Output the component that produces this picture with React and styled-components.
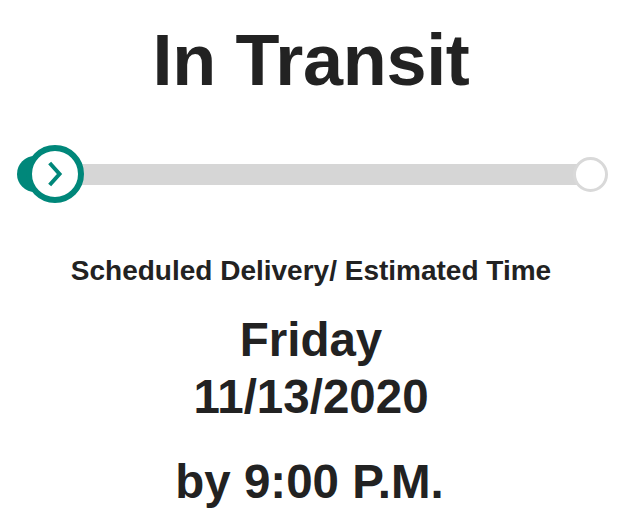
import React from "react";
import styled, { createGlobalStyle } from "styled-components";

const Global = createGlobalStyle`
  html, body { margin: 0; padding: 0; background: #ffffff; }
  body { font-family: "Liberation Sans", Arial, Helvetica, sans-serif; color: #222222; }
`;

const Page = styled.main`
  width: 619px;
  display: flex;
  flex-direction: column;
  align-items: stretch;
  text-align: center;
`;

const Title = styled.h1`
  margin: 24px 0 0 3px;
  font-size: 72px;
  line-height: 72px;
  font-weight: 700;
  letter-spacing: -0.3px;
`;

const Track = styled.div`
  position: relative;
  height: 60px;
  margin: 48px 11px 0 17px;
  display: flex;
  align-items: center;
`;

const StartDot = styled.span`
  flex: none;
  width: 36px;
  height: 36px;
  border-radius: 50%;
  background: #00877a;
  position: relative;
  z-index: 1;
`;

const Bar = styled.div`
  flex: 1;
  height: 21px;
  margin: 0 -18px;
  background: #d6d6d6;
`;

const EndRing = styled.span`
  flex: none;
  width: 29px;
  height: 29px;
  border-radius: 50%;
  border: 3px solid #d9d9d9;
  background: #ffffff;
  position: relative;
  z-index: 1;
`;

const Thumb = styled.span`
  position: absolute;
  left: 9px;
  top: 50%;
  transform: translateY(-50%);
  width: 46px;
  height: 46px;
  border-radius: 50%;
  border: 6px solid #00877a;
  background: #ffffff;
  display: flex;
  align-items: center;
  justify-content: center;
  z-index: 2;
`;

const Label = styled.p`
  margin: 51px 0 0 3px;
  font-size: 28px;
  line-height: 32px;
  font-weight: 700;
`;

const DateBlock = styled.div`
  margin: 24px 0 0 3px;
  display: flex;
  flex-direction: column;
`;

const DateLine = styled.span`
  font-size: 47.5px;
  line-height: 57px;
  font-weight: 700;
`;

const TimeLine = styled.p`
  margin: 28px 0 0;
  font-size: 47.5px;
  line-height: 57px;
  font-weight: 700;
`;

function Chevron() {
  return (
    <svg width="18" height="26" viewBox="0 0 18 26" fill="none">
      <path d="M5 3.5 L13.5 13 L5 22.5" stroke="#00877a" strokeWidth="4" strokeLinecap="square" strokeLinejoin="miter" />
    </svg>
  );
}

export default function App() {
  return (
    <>
      <Global />
      <Page>
        <Title>In Transit</Title>
        <Track>
          <StartDot />
          <Bar />
          <EndRing />
          <Thumb>
            <Chevron />
          </Thumb>
        </Track>
        <Label>Scheduled Delivery/ Estimated Time</Label>
        <DateBlock>
          <DateLine>Friday</DateLine>
          <DateLine>11/13/2020</DateLine>
        </DateBlock>
        <TimeLine>by 9:00 P.M.</TimeLine>
      </Page>
    </>
  );
}
